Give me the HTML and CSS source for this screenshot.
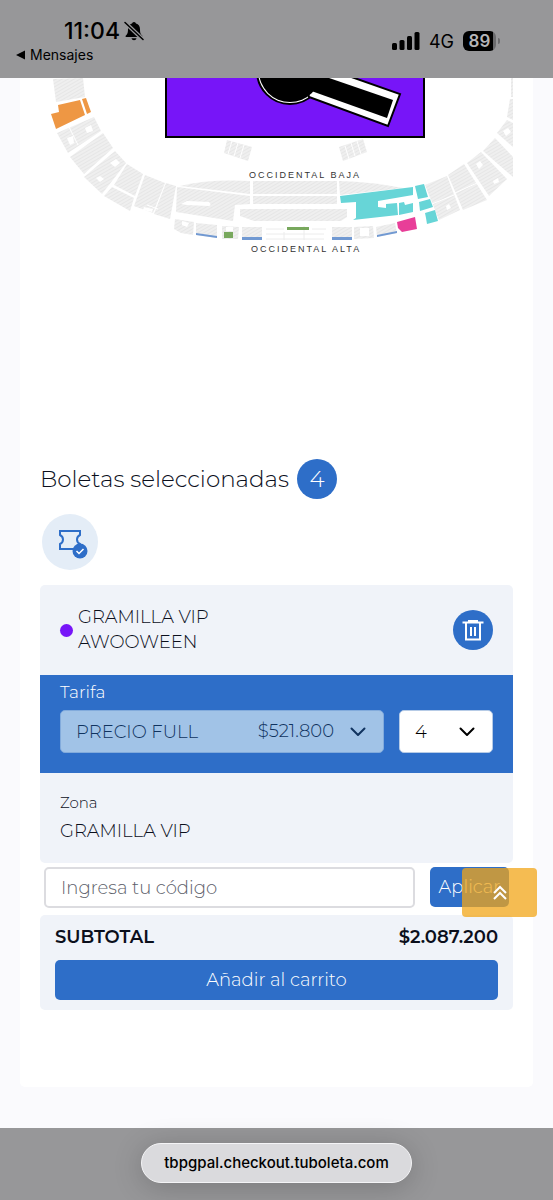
FILE: index.html
```html
<!DOCTYPE html>
<html lang="es">
<head>
    <meta charset="UTF-8">
    <meta name="viewport" content="width=device-width, initial-scale=1.0">
    <title>Boletas seleccionadas</title>
    <link rel="stylesheet" href="styles.css">
</head>
<body>
<header class="status-bar">
    <div class="status-left">
        <div class="clock">
            <span>11:04</span>
            <svg width="20" height="20" viewBox="0 0 20 20" aria-hidden="true">
                <path d="M10 1a2 2 0 0 1 2 1.600c2.600.8 4 2.900 4 5.600 0 4 .8 5 2.300 6.600.5.700.2 1.200-.5 1.200H2.200c-.7 0-1-.5-.5-1.200C3.200 13.200 4 12.200 4 8.200c0-2.700 1.400-4.800 4-5.600A2 2 0 0 1 10 1z"/>
                <path d="M7.500 17.200h5c-.3 1.200-1.200 2-2.500 2s-2.200-.8-2.500-2z"/>
                <path d="M1 1.500l18 17" stroke="#979799" stroke-width="4"/>
                <path d="M1 1.500l18 17" stroke="#000" stroke-width="1.500" stroke-linecap="round"/>
            </svg>
        </div>
        <a class="back" href="#">
            <svg width="9" height="10" viewBox="0 0 9 10" aria-hidden="true"><path d="M0 5L9 .5v9z"/></svg>
            Mensajes
        </a>
    </div>
    <div class="status-right">
        <svg width="28" height="18" viewBox="0 0 28 18" aria-hidden="true">
            <rect x="0" y="11" width="5" height="7" rx="1.500"/>
            <rect x="7.500" y="8" width="5" height="10" rx="1.500"/>
            <rect x="15" y="4" width="5" height="14" rx="1.500"/>
            <rect x="22.500" y="0" width="5" height="18" rx="1.500"/>
        </svg>
        <span class="network">4G</span>
        <span class="battery">89</span>
    </div>
</header>

<main class="card">
    <svg class="map" viewBox="40 78 473 190" role="img" aria-label="Mapa del escenario">
        <defs>
            <pattern id="seats" width="3" height="3" patternUnits="userSpaceOnUse" patternTransform="rotate(60)">
                <rect width="3" height="3" fill="#efefef"/>
                <rect width="1" height="3" fill="#e6e6e6"/>
            </pattern>
        </defs>
        <g fill="url(#seats)">
            <path d="M53 79l30-1 2 19-29 5z"/>
            <path d="M57 133l37-16 7 14-33 22z"/>
            <path d="M70 157l33-24 10 15-29 26z"/>
            <path d="M84 177l31-26 11 12-24 31z"/>
            <path d="M127 164l16 10-8 22-21-11z"/>
            <path d="M112 187l22 11-4 13-26-15z"/>
            <path d="M145 175l20 8-12 30-19-7z"/>
            <path d="M166 183l10 3-6 33-16-5z"/>
            <path d="M180 186q30-7 70-5v13z"/>
            <path d="M177 187l73 9v8l-15 1-2 16-57-9z"/>
            <path d="M253 181h84v13h-84z"/>
            <path d="M253 196h84v8h-84z"/>
            <path d="M240 209h107v8l-6 4h-87l-14-5z"/>
            <path d="M339 181q34 1 64 7l-63 7z"/>
            <path d="M175 219l19 3-1 13-12-2-7-4z"/>
            <path d="M196 223l21 2v13l-21-3z"/>
            <path d="M222 226l17 1-1 12h-16z"/>
            <path d="M242 227h20v13h-20z"/>
            <path d="M332 227h20v13h-20z"/>
            <path d="M354 227l19-1 1 12-20 1z"/>
            <path d="M376 227l19-4 2 10-20 4z"/>
            <path d="M425 185l22-9 13 34-21 10z"/>
            <path d="M448 175l16-11 23 36-24 10z"/>
            <path d="M467 163l14-11 26 27-18 17z"/>
            <path d="M483 151l12-13 18 19v20z"/>
            <path d="M497 133l10-13 6 3v24z"/>
            <path d="M507 117l3-18h3v21z"/>
            <path d="M511 78h2v19h-2z"/>
            <path d="M227 140l25 7-4 14-24-8z"/>
            <path d="M339 147l24-8 4 13-24 9z"/>
        </g>
        <!-- gaps between seat blocks -->
        <g fill="#fff">
            <path d="M67 138l6-2 1 7 -4 2z"/>
            <path d="M85 128l6-3 2 6-6 2z"/>
            <path d="M110 163l6-4 4 4-5 4z"/>
            <path d="M96 178l4-2 4 3-4 3z"/>
            <path d="M144 207l9 2-1 3-9-2z"/>
            <path d="M181 204l6-3 22 1q3 3 0 4l-22-1z"/>
            <path d="M182 221l7 2-2 4-5-2z"/>
            <path d="M226 227h7v4h-7z"/>
            <path d="M360 228h9v8h-9z"/>
            <path d="M476 164l4-3 3 4-4 4z"/>
            <path d="M493 181l5-3 1 4-5 2z"/>
            <path d="M503 131l5-3 3 4-5 4z"/>
            <path d="M446 206l3-2 2 4-4 2z"/>
        </g>
        <g stroke="#fff" fill="none">
            <path d="M232 141l-4 13M238 143l-4 13M244 145l-4 13M345 146l4 13M351 143l4 13M357 141l4 13"/>
            <path d="M69 127l9 18M147 205l11 4M432 204l22-9M455 193l22-10"/>
        </g>
        <path d="M266 229h18M266 234h58M266 239h58M312 229h14M304 226v14M284 232v8" stroke="#ececec" fill="none"/>
        <g fill="#ee9744">
            <path d="M51 114l8-2-1-7 22-5 5 15-29 14z"/>
            <path d="M82 99l4-1 5 14-4 2z"/>
        </g>
        <g fill="#67d5d7">
            <path d="M340 196l73-9v8l-35 6v6l8 1v-4l11-1 1 12-45 5 3-2v-16l-15 1z"/>
            <path d="M399 203l5-1 1 3 8-2v9l-14 3z"/>
            <path d="M415 186l9-2 4 13-10 2z"/>
            <path d="M419 202l11-3 3 8-13 4z"/>
            <path d="M425 213l10-3 3 11-11 3-1-6z"/>
        </g>
        <path d="M397 222l18-5 2 12-15 3-4-4z" fill="#e83e98"/>
        <g fill="#7199d2">
            <path d="M196 233l21 3v2l-21-3z"/>
            <path d="M242 237h20v3h-20z"/>
            <path d="M332 237h20v3h-20z"/>
            <path d="M377 235l20-4v2l-20 4z"/>
        </g>
        <path d="M224 232h9v6h-9zM287 227h22v3h-22z" fill="#78a85d"/>

        <path d="M166 70h258v67H166z" fill="#7715f8" stroke="#000" stroke-width="2"/>
        <!-- stage and runway -->
        <g stroke="#000" stroke-width="2" fill="#fff">
            <circle cx="290" cy="71" r="33"/>
            <path d="M300 59l100 35-12 32-79-29z"/>
        </g>
        <circle cx="290" cy="71" r="31"/>
        <path d="M300 68l93 32-6 18-84-30z"/>
        <g class="map-label">
            <text x="249" y="178">OCCIDENTAL BAJA</text>
            <text x="251" y="252">OCCIDENTAL ALTA</text>
        </g>
    </svg>

    <section class="tickets">
        <h1 class="title">Boletas seleccionadas <span class="count">4</span></h1>

        <div class="ticket-icon">
            <svg width="30" height="30" viewBox="0 0 30 30" aria-hidden="true">
                <path d="M2 2h20v4c-4 2-4 7 0 9v5H2v-5c4-2 4-7 0-9z" fill="none" stroke="#2e6ec8" stroke-width="2"/>
                <circle cx="22" cy="22" r="7.500" fill="#2e6ec8"/>
                <path d="M18.500 22l2.500 2.500 4.500-4.500" fill="none" stroke="#fff" stroke-width="1.500"/>
            </svg>
        </div>

        <div class="ticket">
            <div class="ticket-header">
                <span class="dot"></span>
                <h2>GRAMILLA VIP<br>AWOOWEEN</h2>
                <button class="delete" type="button" aria-label="Eliminar">
                    <svg width="22" height="22" viewBox="0 0 22 22" fill="none" stroke="#fff" stroke-width="2" aria-hidden="true">
                        <path d="M.5 3.500h21M6 2h10M4 4v16.500h14V4M9 8v9M13 8v9"/>
                    </svg>
                </button>
            </div>

            <div class="rate">
                <label for="rate">Tarifa</label>
                <div class="rate-row">
                    <div class="select rate-select">
                        <select id="rate" disabled>
                            <option>PRECIO FULL</option>
                        </select>
                        <span class="price">$521.800</span>
                        <svg class="chevron" width="16" height="10" viewBox="0 0 16 10" aria-hidden="true"><path d="M1.500 1.500L8 8l6.500-6.500"/></svg>
                    </div>
                    <div class="select quantity">
                        <select aria-label="Cantidad">
                            <option>1</option>
                            <option>2</option>
                            <option>3</option>
                            <option selected>4</option>
                        </select>
                        <svg class="chevron" width="16" height="10" viewBox="0 0 16 10" aria-hidden="true"><path d="M1.500 1.500L8 8l6.500-6.500"/></svg>
                    </div>
                </div>
            </div>

            <div class="zone">
                <p class="zone-label">Zona</p>
                <p>GRAMILLA VIP</p>
            </div>
        </div>

        <form class="code">
            <input type="text" placeholder="Ingresa tu código" aria-label="Código">
            <button class="btn" type="button">Aplicar</button>
        </form>

        <div class="summary">
            <div class="subtotal">
                <span>SUBTOTAL</span>
                <span>$2.087.200</span>
            </div>
            <button class="btn" type="button">Añadir al carrito</button>
        </div>
    </section>
</main>

<button class="scroll-top" type="button" aria-label="Volver arriba">
    <svg width="14" height="16" viewBox="0 0 14 16" fill="none" stroke="#fff" stroke-width="2" aria-hidden="true">
        <path d="M1 8l6-6 6 6M1 14l6-6 6 6"/>
    </svg>
</button>

<footer class="browser-bar">
    <a class="address" href="#">tbpgpal.checkout.tuboleta.com</a>
</footer>
</body>
</html>
```
FILE: styles.css
```css
* {
    box-sizing: border-box;
}
body {
    display: flex;
    flex-direction: column;
    min-height: 100vh;
    margin: 0;
    background-color: #fafafd;
    color: #0b0f1c;
    font-family: Montserrat, Inter, sans-serif;
    font-size: 18px;
    font-weight: 300;
}
h1, h2, p {
    margin: 0;
    font-weight: 300;
}
button, input, select {
    margin: 0;
    font: inherit;
}

/* status bar */
.status-bar {
    display: flex;
    justify-content: space-between;
    height: 78px;
    padding: 17px 57px 0 16px;
    background-color: #979799;
    color: #000;
    font-family: Inter, sans-serif;
}
.clock {
    display: flex;
    align-items: center;
    gap: 4px;
    padding-left: 48px;
    font-size: 23px;
    font-weight: 500;
    line-height: 28px;
}
.back {
    display: flex;
    align-items: center;
    gap: 5px;
    color: #000;
    font-size: 14px;
    font-weight: 400;
    line-height: 20px;
    text-decoration: none;
}
.status-right {
    display: flex;
    align-items: center;
    gap: 9px;
    height: 48px;
}
.network {
    font-size: 18px;
    font-weight: 400;
}
.battery {
    position: relative;
    width: 33px;
    border-radius: 6px;
    background: linear-gradient(to right, #000 90%, #6b6b6d 90%);
    color: #b5b5b7;
    font-size: 17px;
    font-weight: 600;
    line-height: 20px;
    text-align: center;
}
.battery::after {
    content: "";
    position: absolute;
    top: 7px;
    right: -4px;
    width: 2px;
    height: 6px;
    border-radius: 0 2px 2px 0;
    background-color: #6b6b6d;
}

/* content */
.card {
    flex: 1;
    margin: 0 20px 41px;
    padding: 0 20px;
    border-radius: 0 0 5px 5px;
    background-color: #fff;
}
.map {
    display: block;
    width: 100%;
}
.map-label {
    fill: #333;
    font-family: "Liberation Sans", Arial, sans-serif;
    font-size: 9px;
    letter-spacing: 2px;
}
.tickets {
    padding: 191px 0 77px;
}
.title {
    display: flex;
    align-items: center;
    gap: 8px;
    font-size: 23px;
    line-height: 40px;
}
.count {
    width: 40px;
    border-radius: 50%;
    background-color: #2e6ec8;
    color: #fff;
    text-align: center;
}
.ticket-icon {
    display: flex;
    align-items: center;
    justify-content: center;
    width: 56px;
    height: 56px;
    margin: 15px 2px;
    padding: 4px 0 0 6px;
    border-radius: 50%;
    background-color: #e4edf7;
}
.ticket {
    overflow: hidden;
    border-radius: 5px;
    background-color: #f0f3f9;
}
.ticket-header {
    display: flex;
    align-items: center;
    gap: 5px;
    height: 90px;
    padding: 0 20px;
}
.ticket-header h2 {
    flex: 1;
    font-size: 18px;
    line-height: 25px;
}
.dot {
    width: 13px;
    height: 13px;
    border-radius: 50%;
    background-color: #7715f8;
}
.delete {
    display: flex;
    align-items: center;
    justify-content: center;
    width: 40px;
    height: 40px;
    padding: 0;
    border: none;
    border-radius: 50%;
    background-color: #2e6ec8;
    cursor: pointer;
}
.rate {
    padding: 5px 20px 20px;
    background-color: #2e6ec8;
    color: #fff;
}
.rate label {
    display: block;
    font-size: 17px;
    line-height: 25px;
    margin-bottom: 5px;
}
.rate-row {
    display: flex;
    gap: 15px;
}
.select {
    position: relative;
}
.select select {
    display: block;
    width: 100%;
    height: 43px;
    padding: 0 15px;
    border: 1px solid #b6cbe6;
    border-radius: 5px;
    appearance: none;
    background-color: #fff;
    color: #000;
    opacity: 1;
}
.rate-select {
    flex: 1;
}
.rate-select select {
    border-color: #82abdc;
    background-color: #a1c3e7;
    color: #10335f;
}
.quantity {
    width: 94px;
}
.price {
    position: absolute;
    top: 0;
    right: 50px;
    color: #10335f;
    line-height: 43px;
}
.chevron {
    position: absolute;
    top: 17px;
    right: 18px;
    fill: none;
    stroke: #000;
    stroke-width: 2;
    stroke-linecap: round;
    stroke-linejoin: round;
    pointer-events: none;
}
.rate-select .chevron {
    stroke: #10335f;
}
.zone {
    padding: 16px 20px 18px;
    line-height: 28px;
}
.zone-label {
    font-size: 15px;
}
.code {
    display: flex;
    gap: 15px;
    padding: 4px 4px 7px;
}
.code input {
    flex: 1;
    min-width: 0;
    height: 41px;
    padding: 0 15px;
    border: 2px solid #dcdce0;
    border-radius: 5px;
    background-color: #fff;
}
.code input::placeholder {
    color: #5c606a;
}
.btn {
    height: 40px;
    padding: 0 8px;
    border: none;
    border-radius: 5px;
    background-color: #2e6ec8;
    color: #fff;
    cursor: pointer;
}
.code .btn {
    width: 79px;
}
.summary {
    padding: 10px 15px;
    border-radius: 5px;
    background-color: #f0f3f9;
}
.subtotal {
    display: flex;
    justify-content: space-between;
    margin-bottom: 10px;
    font-size: 18px;
    font-weight: 600;
    line-height: 25px;
}
.summary .btn {
    width: 100%;
}

.scroll-top {
    position: fixed;
    right: 16px;
    bottom: 283px;
    display: flex;
    align-items: center;
    justify-content: center;
    width: 75px;
    height: 49px;
    padding: 0;
    border: none;
    border-radius: 4px;
    background-color: rgba(241, 165, 24, 0.75);
    cursor: pointer;
}

/* browser bar */
.browser-bar {
    display: flex;
    justify-content: center;
    height: 73px;
    padding-top: 15px;
    background-color: #979799;
}
.address {
    height: 40px;
    padding: 0 22px;
    border: 1px solid #f4f4f6;
    border-radius: 20px;
    background-color: #dadadd;
    box-shadow: 0 4px 30px rgba(0, 0, 0, 0.2);
    color: #000;
    font-family: Inter, sans-serif;
    font-size: 15px;
    font-weight: 500;
    line-height: 38px;
    text-decoration: none;
}
```
